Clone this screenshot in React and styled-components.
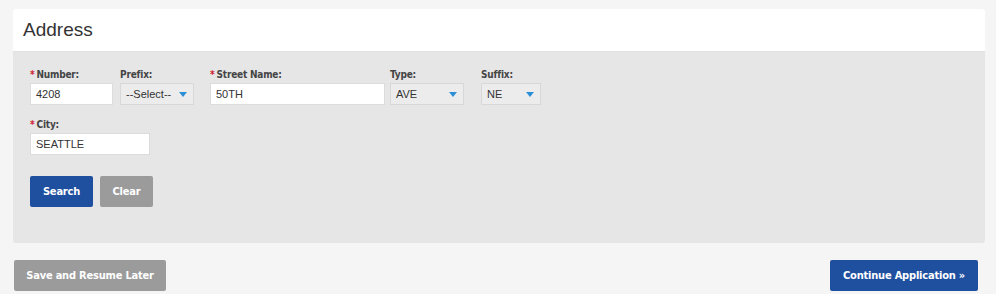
import React from "react";
import styled, { createGlobalStyle } from "styled-components";

const GlobalStyle = createGlobalStyle`
  html, body {
    margin: 0;
    padding: 0;
    background: #f5f5f5;
    font-family: "Liberation Sans", Arial, sans-serif;
  }
`;

const Page = styled.div`
  padding: 9px 11px 0 13px;
`;

const Panel = styled.div`
  border-radius: 3px;
  overflow: hidden;
`;

const PanelHeader = styled.div`
  height: 43px;
  background: #fff;
  display: flex;
  align-items: center;
  padding-left: 10px;
  border-bottom: 1px solid #e0e0e0;
  box-sizing: border-box;
  font-size: 19px;
  color: #333;
`;

const PanelBody = styled.div`
  background: #e6e6e6;
  padding: 17px 17px 36px;
`;

const Row = styled.div`
  display: flex;
  margin-bottom: 14px;
`;

const Field = styled.div`
  width: ${(p) => p.col}px;
  display: flex;
  flex-direction: column;
`;

const Label = styled.label`
  font-size: 10px;
  font-weight: bold;
  line-height: 12px;
  height: 12px;
  margin-bottom: 2px;
  color: #444;
  font-family: "DejaVu Sans Condensed", "Liberation Sans", sans-serif;
  letter-spacing: -0.2px;
`;

const Star = styled.span`
  color: #d0202e;
  margin-right: 2px;
`;

const Input = styled.div`
  width: ${(p) => p.w}px;
  height: 22px;
  box-sizing: border-box;
  background: #fff;
  border: 1px solid #dcdcdc;
  padding: 0 5px;
  font-size: 11px;
  line-height: 20px;
  color: #333;
`;

const Select = styled(Input)`
  background: #ececec;
  border-color: #d8d8d8;
  display: flex;
  align-items: center;
  justify-content: space-between;
  padding-right: 6px;
`;

const Caret = styled.span`
  width: 0;
  height: 0;
  border-left: 4px solid transparent;
  border-right: 4px solid transparent;
  border-top: 5px solid #2b8fd8;
`;

const Buttons = styled.div`
  display: flex;
  gap: 7px;
  margin-top: 21px;
`;

const Button = styled.button`
  height: 31px;
  width: ${(p) => p.w}px;
  padding: 0;
  border: none;
  border-radius: 2px;
  background: ${(p) => (p.primary ? "#1f4f9f" : "#9b9b9b")};
  color: #fff;
  font-family: "DejaVu Sans Condensed", "Liberation Sans", sans-serif;
  font-weight: bold;
  font-size: 11px;
  letter-spacing: -0.2px;
  cursor: pointer;
`;

const Footer = styled.div`
  display: flex;
  justify-content: space-between;
  margin: 17px 7px 0 1px;
`;

function SelectBox({ w, value }) {
  return (
    <Select w={w}>
      <span>{value}</span>
      <Caret />
    </Select>
  );
}

export default function App() {
  return (
    <Page>
      <GlobalStyle />
      <Panel>
        <PanelHeader>Address</PanelHeader>
        <PanelBody>
          <Row>
            <Field col={90}>
              <Label><Star>*</Star>Number:</Label>
              <Input w={83}>4208</Input>
            </Field>
            <Field col={90}>
              <Label>Prefix:</Label>
              <SelectBox w={74} value="--Select--" />
            </Field>
            <Field col={180}>
              <Label><Star>*</Star>Street Name:</Label>
              <Input w={175}>50TH</Input>
            </Field>
            <Field col={91}>
              <Label>Type:</Label>
              <SelectBox w={74} value="AVE" />
            </Field>
            <Field col={60}>
              <Label>Suffix:</Label>
              <SelectBox w={60} value="NE" />
            </Field>
          </Row>
          <Row>
            <Field col={120}>
              <Label><Star>*</Star>City:</Label>
              <Input w={120}>SEATTLE</Input>
            </Field>
          </Row>
          <Buttons>
            <Button primary w={63}>Search</Button>
            <Button w={53}>Clear</Button>
          </Buttons>
        </PanelBody>
      </Panel>
      <Footer>
        <Button w={152}>Save and Resume Later</Button>
        <Button primary w={148}>Continue Application »</Button>
      </Footer>
    </Page>
  );
}
